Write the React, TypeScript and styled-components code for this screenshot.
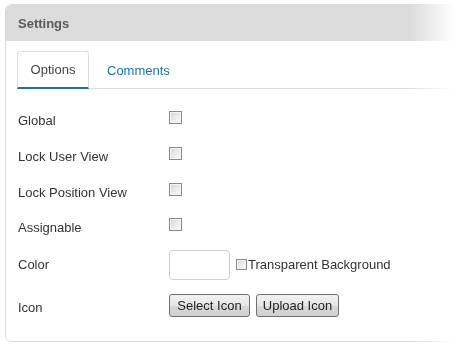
import React from 'react';
import styled, { createGlobalStyle } from 'styled-components';

const GlobalStyle = createGlobalStyle`
  body {
    margin: 0;
    background: #fff;
    font-family: "Liberation Sans", Arial, sans-serif;
  }
`;

const Page = styled.div`
  padding: 4px 0 0 5px;
`;

const Panel = styled.div`
  width: 470px;
  height: 338px;
  box-sizing: border-box;
  border: 1px solid #dadada;
  border-radius: 6px;
  overflow: hidden;
  -webkit-mask-image: linear-gradient(to right, #000 405px, transparent 450px);
  mask-image: linear-gradient(to right, #000 405px, transparent 450px);
`;

const Header = styled.div`
  height: 36px;
  background: #dcdcdc;
  display: flex;
  align-items: center;
  padding-left: 12px;
  font-size: 13px;
  font-weight: bold;
  color: #5a5a5a;
`;

const Body = styled.div`
  padding: 10px 11px 0 11px;
`;

const TabStrip = styled.div`
  display: flex;
  border-bottom: 1px solid #dedede;
  height: 37px;
`;

const Tab = styled.div<{ $active?: boolean }>`
  width: ${(p) => (p.$active ? '72px' : 'auto')};
  padding: ${(p) => (p.$active ? '0' : '0 17px')};
  box-sizing: border-box;
  display: flex;
  align-items: center;
  justify-content: center;
  font-size: 13px;
  color: ${(p) => (p.$active ? '#444' : '#1d6fb5')};
  border: ${(p) => (p.$active ? '1px solid #dedede' : '1px solid transparent')};
  border-bottom: ${(p) => (p.$active ? '2px solid #1d6fb5' : 'none')};
  border-radius: 3px 3px 0 0;
  margin-bottom: -1px;
`;

const Form = styled.div`
  padding-top: 14px;
  display: flex;
  flex-direction: column;
`;

const Row = styled.div<{ $h: number }>`
  display: grid;
  grid-template-columns: 152px 1fr;
  align-items: center;
  height: ${(p) => p.$h}px;
  font-size: 13px;
  color: #333;
`;

const Label = styled.div`
  padding-left: 1px;
`;

const Box = styled.span<{ $small?: boolean }>`
  display: block;
  position: relative;
  top: ${(p) => (p.$small ? 0 : -3)}px;
  width: ${(p) => (p.$small ? 11 : 13)}px;
  height: ${(p) => (p.$small ? 11 : 13)}px;
  box-sizing: border-box;
  border: 1px solid #8a8a8a;
  background: linear-gradient(135deg, #d6d6d6, #fdfdfd);
  box-shadow: inset 0 0 0 1px #f4f4f4;
`;

const Inline = styled.div<{ $gap: number }>`
  display: flex;
  align-items: center;
  gap: ${(p) => p.$gap}px;
`;

const ColorInput = styled.div`
  width: 61px;
  height: 30px;
  box-sizing: border-box;
  border: 1px solid #cfcfcf;
  border-radius: 4px;
  background: #fff;
  position: relative;
  top: 1px;
`;

const Transparent = styled.div`
  display: flex;
  align-items: center;
  gap: 1px;
  font-size: 13px;
  color: #333;
`;

const Button = styled.div<{ $w: number }>`
  width: ${(p) => p.$w}px;
  height: 23px;
  box-sizing: border-box;
  display: flex;
  align-items: center;
  justify-content: center;
  border: 1px solid #707070;
  border-radius: 3px;
  background: linear-gradient(#f2f2f2, #e6e6e6 50%, #d8d8d8 51%, #d0d0d0);
  font-size: 13px;
  color: #222;
  position: relative;
  top: -2px;
`;

const rows = ['Global', 'Lock User View', 'Lock Position View', 'Assignable'];

export default function App() {
  return (
    <>
      <GlobalStyle />
      <Page>
        <Panel>
          <Header>Settings</Header>
          <Body>
            <TabStrip>
              <Tab $active>Options</Tab>
              <Tab>Comments</Tab>
            </TabStrip>
            <Form>
              {rows.map((r) => (
                <Row key={r} $h={35.7}>
                  <Label>{r}</Label>
                  <div>
                    <Box />
                  </div>
                </Row>
              ))}
              <Row $h={36.6}>
                <Label>Color</Label>
                <Inline $gap={6}>
                  <ColorInput />
                  <Transparent>
                    <Box $small />
                    Transparent Background
                  </Transparent>
                </Inline>
              </Row>
              <Row $h={50}>
                <Label>Icon</Label>
                <Inline $gap={6}>
                  <Button $w={81}>Select Icon</Button>
                  <Button $w={83}>Upload Icon</Button>
                </Inline>
              </Row>
            </Form>
          </Body>
        </Panel>
      </Page>
    </>
  );
}
